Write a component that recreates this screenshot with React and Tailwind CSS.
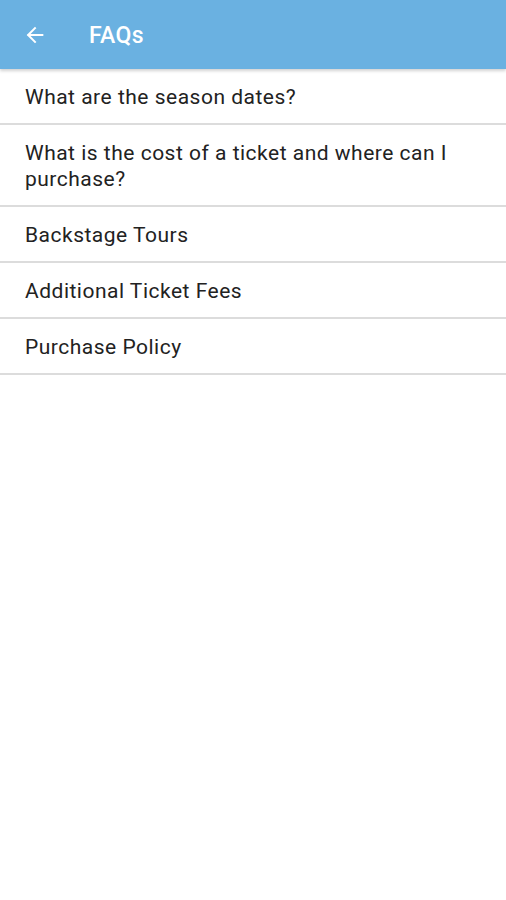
import React from "react";

const faqs = [
  "What are the season dates?",
  "What is the cost of a ticket and where can I purchase?",
  "Backstage Tours",
  "Additional Ticket Fees",
  "Purchase Policy",
];

export default function App() {
  return (
    <div className="min-h-[900px] w-[506px] bg-white" style={{ fontFamily: "Roboto, 'Liberation Sans', sans-serif" }}>
      {/* Toolbar */}
      <header className="relative z-10 flex h-[69px] items-center bg-[#6ab1e1] shadow-[0_2px_3px_rgba(0,0,0,0.18)]">
        <button className="ml-[23px] flex h-6 w-6 items-center justify-center text-white">
          <svg width="22" height="22" viewBox="0 0 24 24" fill="none" stroke="white" strokeWidth="2.2" strokeLinecap="square">
            <path d="M20 12H5" />
            <path d="M12 4.5L4.5 12L12 19.5" />
          </svg>
        </button>
        <h1 className="ml-[42px] mt-[4px] text-[23px] font-medium tracking-[0.4px] text-white">FAQs</h1>
      </header>

      {/* List */}
      <ul>
        {faqs.map((q) => (
          <li
            key={q}
            className="border-b-2 border-[#dcdcdc] px-[25px] pt-[15px] pb-[13px] text-[21px] leading-[26px] tracking-[0.5px] text-[#222222]"
          >
            {q}
          </li>
        ))}
      </ul>
    </div>
  );
}
